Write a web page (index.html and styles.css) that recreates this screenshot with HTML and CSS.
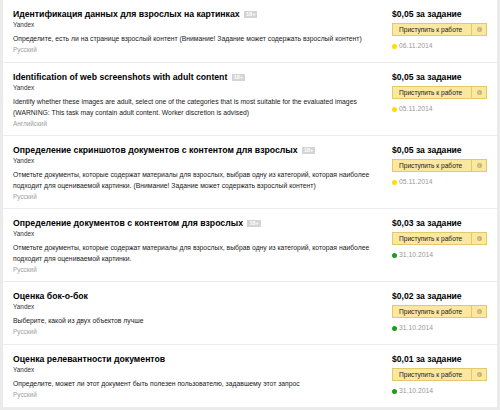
FILE: index.html
```html
<!DOCTYPE html>
<html lang="ru">
<head>
<meta charset="utf-8">
<link rel="stylesheet" href="styles.css">
</head>
<body>
<div class="list">
  <div class="card">
    <div class="main">
      <div class="title">Идентификация данных для взрослых на картинках <span class="badge">18+</span></div>
      <div class="org">Yandex</div>
      <div class="desc">Определите, есть ли на странице взрослый контент (Внимание! Задание может содержать взрослый контент)</div>
      <div class="lang">Русский</div>
    </div>
    <div class="side">
      <div class="price">$0,05 за задание</div>
      <div class="btn"><span class="btn-main">Приступить к работе</span><span class="btn-info"><span class="i">i</span></span></div>
      <div class="date"><span class="dot yellow"></span>06.11.2014</div>
    </div>
  </div>
  <div class="card">
    <div class="main">
      <div class="title">Identification of web screenshots with adult content <span class="badge">18+</span></div>
      <div class="org">Yandex</div>
      <div class="desc">Identify whether these images are adult, select one of the categories that is most suitable for the evaluated images<br>(WARNING: This task may contain adult content. Worker discretion is advised)</div>
      <div class="lang">Английский</div>
    </div>
    <div class="side">
      <div class="price">$0,05 за задание</div>
      <div class="btn"><span class="btn-main">Приступить к работе</span><span class="btn-info"><span class="i">i</span></span></div>
      <div class="date"><span class="dot yellow"></span>05.11.2014</div>
    </div>
  </div>
  <div class="card">
    <div class="main">
      <div class="title">Определение скриншотов документов с контентом для взрослых <span class="badge">18+</span></div>
      <div class="org">Yandex</div>
      <div class="desc">Отметьте документы, которые содержат материалы для взрослых, выбрав одну из категорий, которая наиболее<br>подходит для оцениваемой картинки. (Внимание! Задание может содержать взрослый контент)</div>
      <div class="lang">Русский</div>
    </div>
    <div class="side">
      <div class="price">$0,05 за задание</div>
      <div class="btn"><span class="btn-main">Приступить к работе</span><span class="btn-info"><span class="i">i</span></span></div>
      <div class="date"><span class="dot yellow"></span>05.11.2014</div>
    </div>
  </div>
  <div class="card">
    <div class="main">
      <div class="title">Определение документов с контентом для взрослых <span class="badge">18+</span></div>
      <div class="org">Yandex</div>
      <div class="desc">Отметьте документы, которые содержат материалы для взрослых, выбрав одну из категорий, которая наиболее<br>подходит для оцениваемой картинки.</div>
      <div class="lang">Русский</div>
    </div>
    <div class="side">
      <div class="price">$0,03 за задание</div>
      <div class="btn"><span class="btn-main">Приступить к работе</span><span class="btn-info"><span class="i">i</span></span></div>
      <div class="date"><span class="dot green"></span>31.10.2014</div>
    </div>
  </div>
  <div class="card">
    <div class="main">
      <div class="title">Оценка бок-о-бок</div>
      <div class="org">Yandex</div>
      <div class="desc">Выберите, какой из двух объектов лучше</div>
      <div class="lang">Русский</div>
    </div>
    <div class="side">
      <div class="price">$0,02 за задание</div>
      <div class="btn"><span class="btn-main">Приступить к работе</span><span class="btn-info"><span class="i">i</span></span></div>
      <div class="date"><span class="dot green"></span>31.10.2014</div>
    </div>
  </div>
  <div class="card">
    <div class="main">
      <div class="title">Оценка релевантности документов</div>
      <div class="org">Yandex</div>
      <div class="desc">Определите, может ли этот документ быть полезен пользователю, задавшему этот запрос</div>
      <div class="lang">Русский</div>
    </div>
    <div class="side">
      <div class="price">$0,01 за задание</div>
      <div class="btn"><span class="btn-main">Приступить к работе</span><span class="btn-info"><span class="i">i</span></span></div>
      <div class="date"><span class="dot green"></span>31.10.2014</div>
    </div>
  </div>
</div>
</body>
</html>
```
FILE: styles.css
```css
html, body {
  margin: 0;
  padding: 0;
  background: #ebebeb;
  font-family: "Liberation Sans", Arial, sans-serif;
  color: #000;
}
.list {
  display: flex;
  flex-direction: column;
  gap: 1px;
  padding: 0 3px;
}
.card {
  background: #fff;
  display: flex;
  justify-content: space-between;
  box-sizing: border-box;
  min-height: 62px;
  padding: 8px 10px 6px 10px;
}
.main {
  flex: 1;
  min-width: 0;
  padding-right: 10px;
  white-space: nowrap;
}
.title {
  font-weight: bold;
  font-size: 8.7px;
  line-height: 12px;
}
.badge {
  display: inline-block;
  background: #d4d4d4;
  color: #fff;
  font-size: 5.5px;
  line-height: 7px;
  padding: 0 2px;
  vertical-align: 1px;
  margin-left: 2px;
  font-weight: bold;
}
.org {
  font-size: 6.4px;
  line-height: 9px;
  color: #333;
}
.desc {
  font-size: 6.8px;
  line-height: 11px;
  margin-top: 4px;
  color: #1a1a1a;
}
.lang {
  font-size: 6.4px;
  line-height: 11px;
  color: #a0a0a0;
}
.side {
  width: 95px;
  flex: none;
}
.price {
  font-weight: bold;
  font-size: 8.6px;
  line-height: 12px;
}
.btn {
  display: flex;
  margin-top: 3px;
  height: 11px;
  border: 1px solid #e3c96a;
  background: #fbe8a0;
  font-size: 6.6px;
}
.btn-main {
  flex: 1;
  line-height: 11px;
  padding-left: 6px;
  color: #222;
}
.btn-info {
  width: 14px;
  border-left: 1px solid #e3c96a;
  display: flex;
  align-items: center;
  justify-content: center;
}
.i {
  width: 5px;
  height: 5px;
  border-radius: 50%;
  background: #c4b27a;
  color: #fbe8a0;
  font-size: 4px;
  line-height: 5px;
  text-align: center;
  font-weight: bold;
}
.date {
  margin-top: 5px;
  font-size: 6.8px;
  line-height: 10px;
  color: #999;
  display: flex;
  align-items: center;
  gap: 2px;
}
.dot {
  width: 5px;
  height: 5px;
  border-radius: 50%;
  display: inline-block;
}
.yellow { background: #ffdb00; }
.green { background: #1a9f1a; }
```
